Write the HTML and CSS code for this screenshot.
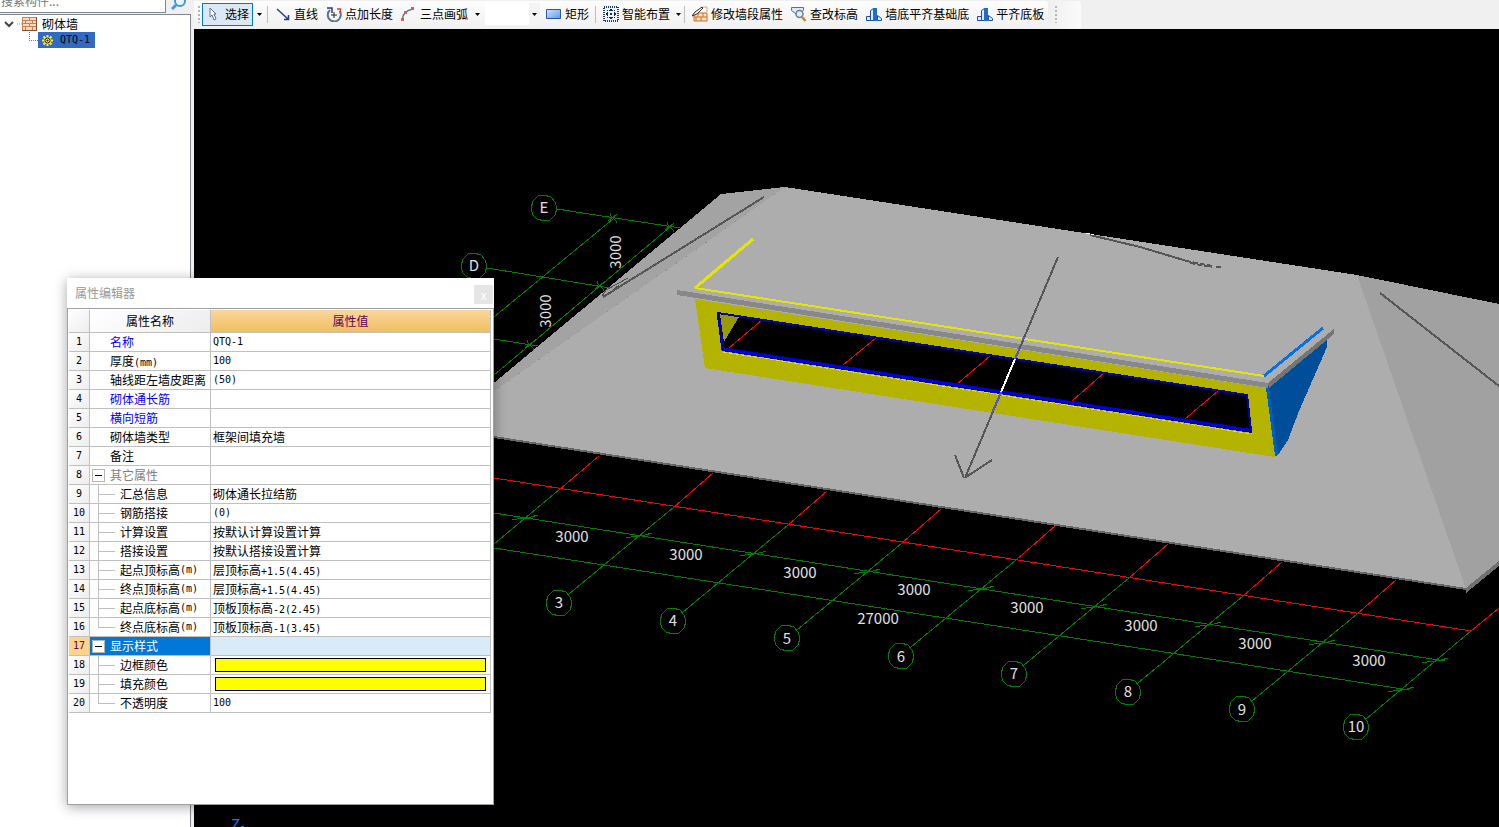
FILE: index.html
```html
<!DOCTYPE html>
<html lang="zh-CN">
<head>
<meta charset="utf-8">
<title>砌体墙</title>
<link rel="stylesheet" href="styles.css">
</head>
<body>
<aside class="side">
  <div class="search">
    <input class="search-box" type="text" aria-label="搜索构件" placeholder="搜索构件...">
    <button class="search-go" type="button" aria-label="搜索">
      <svg width="16" height="16" viewBox="0 0 16 16"><circle cx="9" cy="4" r="5" fill="#eef7ff" stroke="#3f9bdc" stroke-width="2"/><path d="M5 8L1 12" stroke="#3f9bdc" stroke-width="3"/></svg>
    </button>
  </div>
  <div class="tree">
    <div class="node">
      <svg width="22" height="16" viewBox="0 0 22 16"><path d="M5 6l4 4 4-4" fill="none" stroke="#444" stroke-width="2"/><path d="M17 8h5" stroke="#999" stroke-dasharray="1 1"/></svg>
      <svg width="15" height="14" viewBox="0 0 15 14" shape-rendering="crispEdges"><rect width="15" height="14" fill="#c98058"/><g fill="#ffd9b8"><path d="M1 1h6v2H1zM8 1h6v2H8zM1 4h2v2H1zM4 4h6v2H4zM11 4h3v2h-3zM1 7h6v2H1zM8 7h6v2H8zM1 10h2v3H1zM4 10h6v3H4zM11 10h3v3h-3z"/></g><path d="M0 13.500h15M14.500 0v14" stroke="#8a4a2a"/></svg>
      <span class="node-name">砌体墙</span>
    </div>
    <div class="node child">
      <svg class="elbow" width="10" height="16" viewBox="0 0 10 16" shape-rendering="crispEdges"><path d="M.5 0v8.500h9" fill="none" stroke="#777" stroke-dasharray="1 1"/></svg>
      <a class="picked" href="#qtq1">
        <svg width="11" height="11" viewBox="0 0 11 11"><path d="M5.500 0v11M0 5.500h11M1.500 1.500l8 8M9.500 1.500l-8 8" stroke="#ffef3c" stroke-width="2"/><circle cx="5.500" cy="5.500" r="2.500" fill="#ffef3c" stroke="#222"/><circle cx="5.500" cy="5.500" r="1" fill="#222"/></svg>
        <span class="ascii">QTQ-1</span>
      </a>
    </div>
  </div>
</aside>

<main class="work">
  <header class="toolbar">
    <div class="tools">
      <svg class="grip" width="7" height="22" viewBox="0 0 7 22"><path d="M4 3v17" stroke="#b5b5b5" stroke-width="2" stroke-dasharray="2 2"/></svg>
      <button class="tool on" type="button"><svg class="ico" viewBox="0 0 16 16"><path d="M4 2l6 6H8l2 5-2 1-2-5-2 2z" fill="#fff" stroke="#5d6f85"/></svg>选择</button>
      <button class="drop wide" type="button" aria-label="选择方式"><svg width="5" height="3" viewBox="0 0 5 3"><path d="M0 0h5L2.500 3z"/></svg></button>
      <span class="sep"></span>
      <button class="tool" type="button"><svg class="ico" viewBox="0 0 16 16"><path d="M2 3l11 10M9 13.500h4.500V9" fill="none" stroke="#24407a" stroke-width="1.500"/></svg>直线</button>
      <button class="tool" type="button"><svg class="ico" viewBox="0 0 16 16"><path d="M4 4A6.500 6.500 0 1 0 13.500 5" fill="none" stroke="#5d7394" stroke-width="2"/><path d="M1 2h5v5" fill="none" stroke="#24407a" stroke-width="1.500"/><path d="M8 6v6M5 9h6" stroke="#222"/><path d="M11 3h3.500v4" fill="none" stroke="#c8453a" stroke-width="1.500"/></svg>点加长度</button>
      <button class="tool" type="button"><svg class="ico" viewBox="0 0 16 16"><path d="M1.500 13Q2 5 12 3" fill="none" stroke="#4b77a8" stroke-width="1.500"/><path d="M0 12h3v3H0zM3 5h3v3H3zM10 1h3v3h-3z" fill="#d0644a"/></svg>三点画弧</button>
      <button class="drop mid" type="button" aria-label="画弧方式"><svg width="5" height="3" viewBox="0 0 5 3"><path d="M0 0h5L2.500 3z"/></svg></button>
      <span class="combo"><select aria-label="半径"><option></option></select><svg width="11" height="22" viewBox="0 0 11 22"><path d="M0 0h11v22H0z" fill="#f4f4f4"/><path d="M3 10h5l-2.500 3z"/></svg></span>
      <button class="tool" type="button"><svg class="ico" viewBox="0 0 16 16"><defs><linearGradient id="blueFill" x1="0" y1="0" x2="1" y2="1"><stop offset="0" stop-color="#d2e6ff"/><stop offset="1" stop-color="#5b97f5"/></linearGradient></defs><path d="M.5 3.500h14v9H.5z" fill="url(#blueFill)" stroke="#2d55a5"/></svg>矩形</button>
      <span class="sep"></span>
      <button class="tool" type="button"><svg class="ico" viewBox="0 0 16 16" shape-rendering="crispEdges"><path d="M1 1h14v14H1z" fill="#eef4fc" stroke="#1d3b6b" stroke-width="2" stroke-dasharray="1 1"/><path d="M7 3h2v1h1v1H6V4h1zM7 13h2v-1h1v-1H6v1h1zM3 7v2h1v1h1V6H4v1zM13 7v2h-1v1h-1V6h1v1zM4 4h1v1H4zM11 4h1v1h-1zM4 11h1v1H4zM11 11h1v1h-1zM7 7h2v2H7z" fill="#1c2c48"/></svg>智能布置</button>
      <button class="drop" type="button" aria-label="布置方式"><svg width="5" height="3" viewBox="0 0 5 3"><path d="M0 0h5L2.500 3z"/></svg></button>
      <span class="sep"></span>
      <button class="tool" type="button"><svg class="ico" viewBox="0 0 16 16"><path d="M2 7h13v8H2z" fill="#ffe0bd" stroke="#c9702c"/><path d="M2 11h13M6 7v4M11 7v4M4 11v4M9 11v4" stroke="#c9702c"/><path d="M0 10l3-4 7-5 1 1-6 6z" fill="#f5f0d8" stroke="#333"/><path d="M11 1h4v5" fill="none" stroke="#e0a070"/></svg>修改墙段属性</button>
      <button class="tool" type="button"><svg class="ico" viewBox="0 0 16 16"><path d="M.5 1.500h12v3L8 8H5L.5 4.500z" fill="#dce8f8" stroke="#4f6fa8"/><circle cx="8.500" cy="8" r="3.500" fill="#d9f0fb" stroke="#6e7d92" stroke-width="1.500"/><path d="M11 11l3.500 4" stroke="#c98436" stroke-width="2.500"/></svg>查改标高</button>
      <button class="tool" type="button"><svg class="ico" viewBox="0 0 16 16"><path d="M.5 10.500h4v4h-4zM4.500 4.500l3-2v12h-3zM11.500 9.500l4 3v2h-4z" fill="#dcecff" stroke="#1d4f92"/><path d="M7 2h4v13H7z" fill="#1f6fc0"/></svg>墙底平齐基础底</button>
      <button class="tool" type="button"><svg class="ico" viewBox="0 0 16 16"><path d="M.5 10.500h4v4h-4zM4.500 4.500l3-2v12h-3zM11.500 9.500l4 3v2h-4z" fill="#dcecff" stroke="#1d4f92"/><path d="M7 2h4v13H7z" fill="#1f6fc0"/></svg>平齐底板</button>
    </div>
    <div class="tools spare"><svg class="grip" width="7" height="22" viewBox="0 0 7 22"><path d="M4 3v17" stroke="#b5b5b5" stroke-width="2" stroke-dasharray="2 2"/></svg></div>
  </header>

  <svg class="scene" viewBox="194 29 1305 798" preserveAspectRatio="xMinYMin slice" role="img" aria-label="三维视图">
    <defs>
      <g id="axisline">
        <path class="green" d="M674 507L569 594"/>
        <path class="green" d="M626 538q9 -2 14 -2q6 -1 12 -3"/>
        <path class="red" d="M713 473L674 507"/>
      </g>
      <path id="bubble" class="green" d="M0 -13L7 -11L11 -6L13 0L11 7L6 12L0 13L-7 11L-11 7L-13 0L-11 -7L-6 -12Z"/>
      <path id="tick" class="green" d="M-3 -5q1 4 3 5q3 2 4 5M-5 3L4 -4"/>
    </defs>

    <g class="crisp">
      <path fill="#adadad" d="M785 187L1357 275L1466 589L430 427L494 384Z"/>
      <path fill="#a3a3a3" d="M721 194L785 187L494 391L430 437V436Z"/>
      <path fill="#a1a1a1" d="M1357 275L1499 304V562L1466 589Z"/>
      <path fill="#666" d="M430 426L1466 588V590L430 428Z"/>
      <path fill="#707070" d="M1466 588L1499 561V566L1466 593Z"/>
      <path fill="none" stroke="#8a8a8a" stroke-dasharray="1 11" d="M785 187L494 391"/>

      <use href="#axisline"/>
      <use href="#axisline" x="114" y="18"/>
      <use href="#axisline" x="228" y="36"/>
      <use href="#axisline" x="342" y="53"/>
      <use href="#axisline" x="455" y="71"/>
      <use href="#axisline" x="569" y="89"/>
      <use href="#axisline" x="683" y="107"/>
      <path class="green" d="M1471 631L1366 719M1422 663q9 -2 14 -2q6 -1 12 -3M1388 692q9 -2 14 -2q6 -1 12 -3M560 489L494 544M512 520q9 -2 14 -2q6 -1 12 -3"/>
      <path class="green" d="M494 513L1445 661M494 548L1409 690"/>
      <path class="red" d="M494 478L1471 631L1499 608M599 456L560 489"/>

      <path class="green" d="M557 209L680 228M487 268L610 288M494 339L538 346M613 219L494 317M670 227L494 375"/>
      <use href="#tick" x="613" y="218"/>
      <use href="#tick" x="670" y="227"/>
      <use href="#tick" x="600" y="286"/>
      <use href="#tick" x="530" y="345"/>
      <use href="#bubble" x="544" y="208"/>
      <use href="#bubble" x="474" y="266"/>
      <use href="#bubble" x="559" y="603"/>
      <use href="#bubble" x="673" y="621"/>
      <use href="#bubble" x="787" y="638"/>
      <use href="#bubble" x="901" y="656"/>
      <use href="#bubble" x="1014" y="674"/>
      <use href="#bubble" x="1128" y="692"/>
      <use href="#bubble" x="1242" y="709"/>
      <use href="#bubble" x="1356" y="727"/>

      <path class="dark" d="M764 197L603 297"/>
      <path fill="none" stroke="#505050" d="M628 278L606 290L602 296M619 285L605 297"/>
      <path class="dark" d="M1090 235L1140 247L1187 261M1380 293L1499 386"/>
      <path class="dark" stroke-dasharray="5 2" d="M1186 261L1212 266M1190 263L1212 267M1216 267L1222 267"/>
      <path stroke="#fff" d="M1086 233.500h4M1091 234.500h3"/>

      <path fill="#b3b300" d="M695 299L1266 388L1275 457L705 368Z"/>
      <path fill="#000" d="M717 312L1248 395L1252 432L723 350Z"/>
      <path fill="#999900" d="M720 314L739 317L724 342Z"/>
      <path class="red" d="M762 320L729 348M876 338L843 365M990 356L957 384M1104 373L1072 401M1218 391L1185 419"/>
      <path fill="none" stroke="#e6e600" d="M723 352L1252 434" stroke-dasharray="4 2"/>
      <path fill="none" stroke="#0000b3" stroke-width="2" d="M718 313L1247 395"/>
      <path fill="none" stroke="#0000b3" stroke-width="3" d="M718 312L723 350"/>
      <path fill="none" stroke="#0000b3" stroke-width="2" d="M1247 394L1251 431"/>
      <path fill="none" stroke="#0000b3" stroke-width="4" d="M722 349L1252 431"/>
      <path fill="none" stroke="#0000e6" stroke-width="2" d="M724 349L1250 430"/>

      <path fill="#004d99" d="M1266 388L1327 340V347L1299 411L1288 440L1278 455L1275 456Z"/>
      <path fill="#0060bf" d="M1266 388L1269 388L1278 455L1275 456Z"/>
      <path fill="#888" d="M677 290L1268 382V388L677 295Z"/>
      <path fill="#adadad" d="M677 290L695 287L1264 376L1323 329L1333 329L1268 383Z"/>
      <path fill="#757575" d="M1268 383L1334 329V334L1269 388Z"/>
      <path fill="none" stroke="#e6e600" stroke-width="3" d="M753 239L695 288"/>
      <path fill="none" stroke="#e6e600" stroke-width="2" d="M695 288L1264 376"/>
      <path fill="none" stroke="#0073e6" stroke-width="3" d="M1264 376L1323 328"/>

      <path class="dark" d="M1058 257L965 478M955 455L964 478M992 460L966 477"/>
      <path class="beam" stroke="#4d4dff" d="M1024 337L1023 340M1020 348L1015 359M1001 392L992 413"/>
      <path class="beam" stroke="#fff" d="M1015 359L1001 392"/>
      <path stroke="#0080ff" d="M241 826.500h3"/>
    </g>

    <g class="label">
      <text x="544" y="213">E</text><text x="474" y="271">D</text>
      <text x="559" y="608">3</text><text x="673" y="626">4</text><text x="787" y="644">5</text><text x="901" y="662">6</text>
      <text x="1014" y="679">7</text><text x="1128" y="697">8</text><text x="1242" y="715">9</text><text x="1356" y="732">10</text>
      <text x="572" y="542">3000</text><text x="686" y="560">3000</text><text x="800" y="578">3000</text><text x="914" y="595">3000</text>
      <text x="1027" y="613">3000</text><text x="1141" y="631">3000</text><text x="1255" y="649">3000</text><text x="1369" y="666">3000</text>
      <text x="878" y="624">27000</text>
      <text transform="translate(621 252) rotate(-90)">3000</text>
      <text transform="translate(551 311) rotate(-90)">3000</text>
    </g>
    <text class="zaxis" x="231" y="830">Z</text>
  </svg>
</main>

<section class="window" aria-label="属性编辑器">
  <div class="caption"><span>属性编辑器</span><button class="close" type="button" aria-label="关闭">x</button></div>
  <div class="sheet">
    <table class="props">
      <colgroup><col class="c-no"><col class="c-name"><col></colgroup>
      <thead><tr><th></th><th>属性名称</th><th class="lit">属性值</th></tr></thead>
      <tbody>
        <tr><th class="ascii">1</th><td class="name blue">名称</td><td class="ascii">QTQ-1</td></tr>
        <tr><th class="ascii">2</th><td class="name">厚度<span class="ascii">(mm)</span></td><td class="ascii">100</td></tr>
        <tr><th class="ascii">3</th><td class="name">轴线距左墙皮距离</td><td class="ascii">(50)</td></tr>
        <tr><th class="ascii">4</th><td class="name blue">砌体通长筋</td><td></td></tr>
        <tr><th class="ascii">5</th><td class="name blue">横向短筋</td><td></td></tr>
        <tr><th class="ascii">6</th><td class="name">砌体墙类型</td><td>框架间填充墙</td></tr>
        <tr><th class="ascii">7</th><td class="name">备注</td><td></td></tr>
        <tr><th class="ascii">8</th><td class="group"><div class="line"><button class="fold" type="button" aria-label="折叠"></button>其它属性</div></td><td></td></tr>
        <tr><th class="ascii">9</th><td class="sub"><div class="line"><i class="branch"></i>汇总信息</div></td><td>砌体通长拉结筋</td></tr>
        <tr><th class="ascii">10</th><td class="sub"><div class="line"><i class="branch"></i>钢筋搭接</div></td><td class="ascii">(0)</td></tr>
        <tr><th class="ascii">11</th><td class="sub"><div class="line"><i class="branch"></i>计算设置</div></td><td>按默认计算设置计算</td></tr>
        <tr><th class="ascii">12</th><td class="sub"><div class="line"><i class="branch"></i>搭接设置</div></td><td>按默认搭接设置计算</td></tr>
        <tr><th class="ascii">13</th><td class="sub"><div class="line"><i class="branch"></i>起点顶标高<span class="ascii">(m)</span></div></td><td>层顶标高<span class="ascii">+1.5(4.45)</span></td></tr>
        <tr><th class="ascii">14</th><td class="sub"><div class="line"><i class="branch"></i>终点顶标高<span class="ascii">(m)</span></div></td><td>层顶标高<span class="ascii">+1.5(4.45)</span></td></tr>
        <tr><th class="ascii">15</th><td class="sub"><div class="line"><i class="branch"></i>起点底标高<span class="ascii">(m)</span></div></td><td>顶板顶标高<span class="ascii">-2(2.45)</span></td></tr>
        <tr><th class="ascii">16</th><td class="sub"><div class="line"><i class="branch last"></i>终点底标高<span class="ascii">(m)</span></div></td><td>顶板顶标高<span class="ascii">-1(3.45)</span></td></tr>
        <tr class="current"><th class="ascii">17</th><td class="group"><div class="line"><button class="fold" type="button" aria-label="折叠"></button>显示样式</div></td><td></td></tr>
        <tr><th class="ascii">18</th><td class="sub"><div class="line"><i class="branch"></i>边框颜色</div></td><td><button class="swatch" type="button" aria-label="边框颜色"></button></td></tr>
        <tr><th class="ascii">19</th><td class="sub"><div class="line"><i class="branch"></i>填充颜色</div></td><td><button class="swatch" type="button" aria-label="填充颜色"></button></td></tr>
        <tr><th class="ascii">20</th><td class="sub"><div class="line"><i class="branch last"></i>不透明度</div></td><td class="ascii">100</td></tr>
      </tbody>
    </table>
  </div>
</section>
</body>
</html>
```
FILE: styles.css
```css
* { box-sizing: border-box; }

body {
  margin: 0;
  display: flex;
  height: 100vh;
  overflow: hidden;
  background: #f0f0f0;
  color: #000;
  font: 12px/18px "Noto Sans CJK SC", sans-serif;
}

button { margin: 0; padding: 0; border: 0; background: none; font: inherit; color: inherit; }
svg { display: block; flex: none; }
.ascii { font-family: "DejaVu Sans Mono", monospace; font-size: 10px; }

/* component tree */
.side { flex: none; width: 191px; display: flex; flex-direction: column; }
.search { display: flex; align-items: flex-end; height: 13px; overflow: hidden; }
.search-box {
  flex: none;
  width: 166px;
  height: 26px;
  padding: 0 1px;
  border: 1px solid #82878f;
  border-left: 0;
  background: #fff;
  font: inherit;
}
.search-box::placeholder { color: #777; }
.search-go { width: 24px; height: 24px; padding: 8px 0 0 5px; }
.tree {
  flex: 1;
  margin-top: 1px;
  padding-top: 1px;
  border: 1px solid #82878f;
  border-width: 1px 1px 0 0;
  background: #fff;
}
.node { display: flex; align-items: center; height: 16px; }
.node-name { margin-left: 5px; }
.elbow { margin-left: 29px; }
.picked {
  display: flex;
  align-items: center;
  gap: 7px;
  width: 57px;
  height: 16px;
  margin-left: -1px;
  padding-left: 4px;
  background: #316ac5;
  color: #000;
  text-decoration: none;
}

/* toolbar */
.work { flex: 1; display: flex; flex-direction: column; min-width: 0; margin-left: 3px; }
.toolbar { display: flex; flex: none; gap: 3px; height: 29px; padding-top: 1px; white-space: nowrap; }
.tools {
  display: flex;
  align-items: center;
  height: 28px;
  padding: 0 0 2px 1px;
  border-radius: 0 3px 3px 0;
  background: linear-gradient(#fdfdfd, #f0f0f0);
}
.spare { width: 30px; background: linear-gradient(90deg, #f0f0f0, #fbfbfb); }
.tool { display: flex; align-items: center; gap: 3px; height: 23px; padding: 0 4px; }
.tool.on { padding: 0 3px; border: 1px solid #0078d7; background: #dbe9f7; }
.ico { width: 16px; height: 16px; }
.drop { display: flex; align-items: center; justify-content: center; width: 8px; height: 23px; }
.drop.mid { width: 10px; }
.drop.wide { width: 12px; }
.sep { width: 1px; height: 17px; margin: 0 3px 0 2px; background: #bdbdbd; }
.combo { display: flex; height: 22px; margin: 0 2px 0 3px; background: #fff; }
.combo select { width: 44px; border: 0; background: #fff; appearance: none; font: inherit; }

/* 3D view */
.scene { flex: 1; width: 100%; min-height: 0; background: #000; }
.crisp { shape-rendering: crispEdges; }
.green { fill: none; stroke: #008000; }
.red { fill: none; stroke: #f00; }
.dark { fill: none; stroke: #555; stroke-width: 2; }
.beam { fill: none; stroke-width: 2; }
.label { fill: #e0e0e0; font-size: 15px; text-anchor: middle; }
.zaxis { fill: #0080ff; font-size: 15px; }

/* property editor */
.window {
  position: absolute;
  left: 67px;
  top: 278px;
  width: 427px;
  background: #fff;
  box-shadow: 0 2px 12px rgba(0, 0, 0, 0.35);
}
.caption {
  display: flex;
  align-items: center;
  justify-content: space-between;
  height: 30px;
  padding: 0 1px 0 8px;
  color: #999;
}
.close { width: 19px; height: 19px; margin-top: 3px; background: #e5e5e5; color: #fff; line-height: 16px; }
.sheet { padding: 1px 2px 91px 1px; border: 1px solid #a0a0a8; }
.props { width: 422px; table-layout: fixed; border-collapse: separate; border-spacing: 0; }
.c-no { width: 21px; }
.c-name { width: 121px; }
.props th, .props td {
  height: 19px;
  padding: 0 0 0 2px;
  border: 1px solid #c0c0c0;
  border-width: 0 1px 1px 0;
  line-height: 18px;
  font-weight: 400;
  text-align: left;
  white-space: nowrap;
}
.props th { padding: 0; background: linear-gradient(135deg, #fff, #ededed); text-align: center; }
.props thead th { height: 23px; line-height: 22px; }
.props thead .lit { background: linear-gradient(#f9d79c, #f0bf60); color: #600060; }
.props .name { padding-left: 20px; }
.props .blue { color: #00f; }
.props .group, .props .sub { padding: 0; }
.props .group { color: #808080; }
.props span.ascii { line-height: 12px; }
.line { display: flex; align-items: center; height: 18px; }
.branch {
  width: 30px;
  height: 18px;
  background:
    linear-gradient(#c0c0c0, #c0c0c0) 8px 0 / 1px 18px no-repeat,
    linear-gradient(#c0c0c0, #c0c0c0) 8px 9px / 17px 1px no-repeat;
}
.branch.last {
  background:
    linear-gradient(#c0c0c0, #c0c0c0) 8px 0 / 1px 9px no-repeat,
    linear-gradient(#c0c0c0, #c0c0c0) 8px 9px / 17px 1px no-repeat;
}
.fold {
  width: 13px;
  height: 13px;
  margin: 0 5px 0 2px;
  border: 1px solid #b4b4b4;
  background: linear-gradient(#000, #000) center / 7px 1px no-repeat #fff;
}
.props .current th { background: #ffd38a; color: #600060; }
.props .current td { background: #d9eaf8; }
.props .current .group { background: #0078d7; color: #fff; }
.swatch {
  display: block;
  width: calc(100% - 6px);
  height: 14px;
  margin-left: 2px;
  border: 1px solid #000;
  background: #ff0;
}
```
